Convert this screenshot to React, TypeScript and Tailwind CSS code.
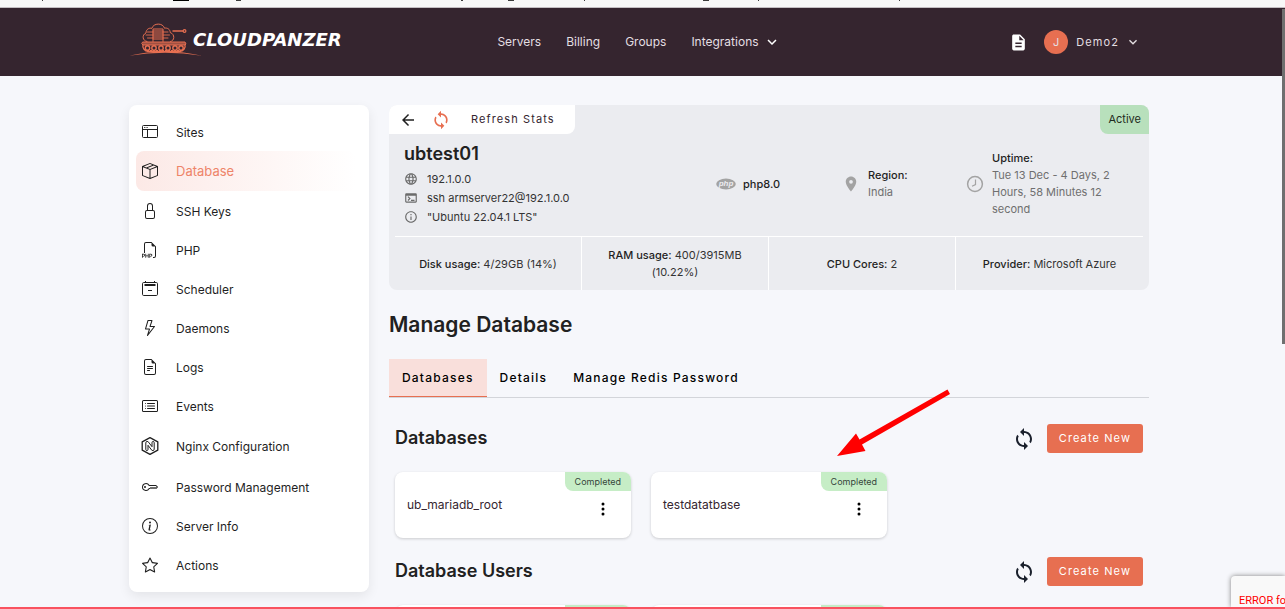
import type { ReactNode } from "react";
import clsx from "clsx";
import {
  BsBoxSeam,
  BsCardList,
  BsFileEarmarkText,
  BsFiletypePhp,
  BsInfoCircle,
  BsKey,
  BsLightning,
  BsLock,
  BsStar,
  BsThreeDotsVertical,
} from "react-icons/bs";
import {
  MdArrowBack,
  MdDescription,
  MdInfoOutline,
  MdKeyboardArrowDown,
  MdLanguage,
  MdLocationOn,
  MdOutlineTerminal,
  MdSync,
} from "react-icons/md";

function SitesIcon() {
  return (
    <svg viewBox="0 0 16 16" className="size-4" fill="none" stroke="currentColor" aria-hidden="true">
      <rect x="0.5" y="1.5" width="15" height="12" rx="1" />
      <path d="M1 5.5h14M5.5 5.5v8" />
      <path d="M2 3.5h4" strokeWidth="0.8" strokeDasharray="1 0.6" />
    </svg>
  );
}

function SchedulerIcon() {
  return (
    <svg viewBox="0 0 16 16" className="size-4" fill="none" stroke="currentColor" aria-hidden="true">
      <rect x="0.5" y="1.5" width="15" height="13" rx="1.2" />
      <path d="M3.5 0v1.5M12.5 0v1.5M6 9.5h4" />
      <path d="M2.5 4h11" strokeWidth="2" />
    </svg>
  );
}

function NginxIcon() {
  return (
    <svg viewBox="0 0 18 18" className="size-[18px]" fill="none" stroke="currentColor" strokeLinejoin="round" aria-hidden="true">
      <path d="M9 0.7 16.8 4.8v8.4L9 17.3 1.2 13.2V4.8z" strokeWidth="1.3" />
      <path d="M4.8 12.6V5.8q0-1.3 1.3-1.3h.9l4 5.2V5.6q0-1.1 1.1-1.1t1.1 1.1v6.6q0 1.3-1.3 1.3h-.9L7 8.3v4.2q0 1-1.1 1t-1.1-.9z" />
    </svg>
  );
}

function PhpIcon() {
  return (
    <svg viewBox="0 0 20 12" className="h-3 w-5" aria-hidden="true">
      <ellipse cx="10" cy="6" rx="9.8" ry="5.4" fill="#a3a3a3" />
      <text x="10" y="8.4" textAnchor="middle" fontSize="8" fontStyle="italic" fontWeight="bold" fontFamily="Liberation Sans, sans-serif" fill="#ebecf0">
        php
      </text>
    </svg>
  );
}

function ClockIcon() {
  return (
    <svg viewBox="0 0 18 18" className="size-[18px] shrink-0 text-[#a3a3a3]" fill="none" stroke="currentColor" aria-hidden="true">
      <circle cx="9" cy="9" r="7.4" strokeWidth="1.5" />
      <path d="M9.5 4.5v5L6 11.2" strokeWidth="1.2" />
    </svg>
  );
}

function TankLogo() {
  return (
    <svg viewBox="0 0 74 34" className="-mr-2.5 h-[34px] w-[74px]" fill="none" stroke="#e76f51" strokeWidth="1" strokeLinecap="round" aria-hidden="true">
      <path d="M18 18.5c-4.5-.5-5.5-6.5-1-8.5 0-3.5 3-5.5 5.800-4.600C24.500-.3 34-.3 35.500 5.200c3-.7 5.700 1.300 5.700 4.300 5 1.800 4.500 8.500.3 9" />
      <path d="M24 18.5V6h10v12.5" />
      <path d="M24 8h10M24 10h10M24 12h10M24 14h10M24 16h10" strokeWidth="1.2" />
      <path d="M18.5 9h5.5M17 12h7M18.5 15h5.5M34 9h5M34 12h6.5M34 15h5" strokeWidth="0.9" />
      <path d="M44 8h10" strokeWidth="1.5" />
      <circle cx="55.5" cy="8" r="1.4" strokeWidth="1.2" />
      <path d="M14 19h42l1 2-1 1H14l-1-1z" fill="#e76f51" fillOpacity="0.6" />
      <path d="M14 22c-1 3 2 6.3 5 6.3h32c3 0 6-3.3 5-6.3" strokeWidth="1.3" />
      {[18.5, 25, 32, 39, 46, 52].map((cx) => (
        <circle key={cx} cx={cx} cy="25" r="2.2" strokeWidth="1.4" />
      ))}
      <path d="M18 28h34" strokeWidth="1.8" strokeDasharray="2 1" strokeLinecap="butt" />
      <path d="M0 32.8Q36 24 73 32.8 36 26.5 0 32.8z" fill="#e76f51" stroke="none" />
    </svg>
  );
}

const navLinks = ["Servers", "Billing", "Groups"];

const menu: { label: string; icon: ReactNode; active?: boolean; tall?: boolean }[] = [
  { label: "Sites", icon: <SitesIcon /> },
  { label: "Database", icon: <BsBoxSeam />, active: true },
  { label: "SSH Keys", icon: <BsLock /> },
  { label: "PHP", icon: <BsFiletypePhp /> },
  { label: "Scheduler", icon: <SchedulerIcon /> },
  { label: "Daemons", icon: <BsLightning /> },
  { label: "Logs", icon: <BsFileEarmarkText /> },
  { label: "Events", icon: <BsCardList /> },
  { label: "Nginx Configuration", icon: <NginxIcon />, tall: true },
  { label: "Password Management", icon: <BsKey /> },
  { label: "Server Info", icon: <BsInfoCircle /> },
  { label: "Actions", icon: <BsStar /> },
];

const usage = [
  { label: "Disk usage:", value: "4/29GB (14%)" },
  { label: "RAM usage:", value: "400/3915MB (10.22%)" },
  { label: "CPU Cores:", value: "2" },
  { label: "Provider:", value: "Microsoft Azure" },
];

const tabs = ["Databases", "Details", "Manage Redis Password"];

function Header() {
  return (
    <header className="shrink-0 bg-[#35252f] pr-[7px] text-[#e4dfe2]">
      <div className="mx-auto grid h-[68px] max-w-[1020px] grid-cols-[1fr_auto_1fr] items-center">
        <a href="#" className="flex items-center pb-1">
          <TankLogo />
          <span className="font-['DejaVu_Sans',sans-serif] text-lg font-bold text-white italic">CLOUDPANZER</span>
        </a>
        <nav className="flex items-center gap-[25px] text-xs">
          {navLinks.map((link) => (
            <a key={link} href="#">{link}</a>
          ))}
          <button type="button" className="flex items-center gap-1">
            Integrations
            <MdKeyboardArrowDown className="size-[18px] text-white" />
          </button>
        </nav>
        <div className="flex items-center justify-end gap-4 pr-2">
          <button type="button" aria-label="Documentation">
            <MdDescription className="size-[19px] text-white" />
          </button>
          <button type="button" className="flex items-center gap-2 text-[11px] tracking-widest">
            <span className="flex size-6 items-center justify-center rounded-full bg-[#e76f51] text-[11px] tracking-normal">J</span>
            Demo2
            <MdKeyboardArrowDown className="-ml-0.5 size-4" />
          </button>
        </div>
      </div>
    </header>
  );
}

function Sidebar() {
  return (
    <nav className="w-60 shrink-0 rounded-lg bg-white px-[7px] pt-[7px] pb-2 shadow-[0_4px_12px_rgba(0,0,0,0.08)]">
      {menu.map((item) => (
        <a
          key={item.label}
          href="#"
          className={clsx(
            "mr-1.5 flex items-center gap-[17px] rounded-lg pl-[5px] text-[#1f1f1f]",
            item.tall ? "h-[42px]" : item.active ? "h-10" : "h-[39px]",
            item.active ? "bg-linear-to-r from-[#fce9e6] to-white text-[13px]" : "text-xs",
          )}
        >
          <span className="flex w-[18px] justify-center text-base">{item.icon}</span>
          <span className={clsx("pt-0.5", item.active && "text-[#ee8469]")}>{item.label}</span>
        </a>
      ))}
    </nav>
  );
}

function ServerCard() {
  return (
    <section className="overflow-hidden rounded-lg bg-[#ebecf0] text-[11px] text-[#333]">
      <div className="flex h-[29px] items-stretch justify-between">
        <div className="flex items-center rounded-br-lg bg-white pr-5 pl-2.5">
          <button type="button" aria-label="Back">
            <MdArrowBack className="size-[18px] text-[#212121]" />
          </button>
          <button type="button" className="flex items-center text-[11px] tracking-widest text-[#35252f]">
            <MdSync className="mr-5 ml-3.5 size-5 text-[#e76f51]" />
            Refresh Stats
          </button>
        </div>
        <span className="flex items-center rounded-bl-lg bg-[#b8e0bc] px-2 text-[#1f2b20]">Active</span>
      </div>
      <div className="flex h-[102px] items-center px-[15px] pb-0.5">
        <div className="w-[312px]">
          <h1 className="mb-1 text-lg leading-6 font-semibold text-[#212121]">ubtest01</h1>
          <ul className="leading-[19px]">
            <li className="flex items-center gap-[9px]">
              <MdLanguage className="size-3.5 text-[#6b6b6b]" />
              192.1.0.0
            </li>
            <li className="flex items-center gap-[9px]">
              <MdOutlineTerminal className="size-3.5 text-[#6b6b6b]" />
              ssh armserver22@192.1.0.0
            </li>
            <li className="flex items-center gap-[9px]">
              <MdInfoOutline className="size-3.5 text-[#6b6b6b]" />
              "Ubuntu 22.04.1 LTS"
            </li>
          </ul>
        </div>
        <div className="flex w-[126px] items-center gap-[7px] font-medium text-[#1f1f1f]">
          <PhpIcon />
          php8.0
        </div>
        <div className="flex w-[124px] items-center gap-2">
          <MdLocationOn className="size-[18px] text-[#a3a3a3]" />
          <div className="leading-[17px] text-[#6f6f6f]">
            <p className="font-medium text-[#1f1f1f]">Region:</p>
            <p>India</p>
          </div>
        </div>
        <div className="flex flex-1 items-center gap-2">
          <ClockIcon />
          <div className="w-[122px] leading-[17px] text-[#6f6f6f]">
            <p className="font-medium text-[#1f1f1f]">Uptime:</p>
            <p>Tue 13 Dec - 4 Days, 2 Hours, 58 Minutes 12 second</p>
          </div>
        </div>
      </div>
      <dl className="mx-1.5 grid grid-cols-4 divide-x divide-white border-t border-white text-center leading-[17px]">
        {usage.map((item) => (
          <div key={item.label} className="flex h-[53px] items-center justify-center px-5 pt-px">
            <div>
              <dt className="inline font-medium text-[#1f1f1f]">{item.label}</dt>{" "}
              <dd className="inline">{item.value}</dd>
            </div>
          </div>
        ))}
      </dl>
    </section>
  );
}

function DatabaseSection({ title, items }: { title: string; items: string[] }) {
  return (
    <section className="px-1.5">
      <div className="flex items-center">
        <h3 className="flex-1 pb-0.5 text-lg leading-6 font-semibold text-[#212121]">{title}</h3>
        <button type="button" aria-label={`Refresh ${title}`} className="mr-[11px]">
          <MdSync className="size-6 text-[#1a202c]" />
        </button>
        <button type="button" className="h-[29px] rounded-[3px] bg-[#e76f51] px-3 text-[11px] tracking-widest text-white">
          Create New
        </button>
      </div>
      <div className="mt-[19px] grid grid-cols-3 gap-5">
        {items.map((name) => (
          <article key={name} className="relative flex h-[66px] items-center justify-between rounded-lg bg-white pr-5 pl-3 text-xs text-[#35252f] shadow-[0_1px_3px_rgba(0,0,0,0.18)]">
            <span>{name}</span>
            <button type="button" aria-label={`${name} options`} className="pt-2">
              <BsThreeDotsVertical className="size-4 text-black" />
            </button>
            <span className="absolute top-0 right-0 flex h-[19px] items-center rounded-tr-lg rounded-bl-lg bg-[#c6edc6] px-2.5 text-[9px] text-[#35453a]">
              Completed
            </span>
          </article>
        ))}
      </div>
    </section>
  );
}

export default function App() {
  return (
    <div className="relative flex h-screen flex-col overflow-hidden border-b-2 border-[#f9525f] bg-[#f6f7fb] font-[Inter,sans-serif]">
      <div className="h-2 shrink-0 border-b border-[#c4bfc3] bg-[#f8f8f8]">
        <svg className="block h-1 w-full" fill="#3b3b3b" aria-hidden="true">
          <path d="M173 0h16v1h-16z" fill="#000" />
          <path d="M42 0h1v1h-1zM236 0h5v1h-5zM461 0h2v1h-2zM508 0h6v1h-6zM584 0h1v1h-1zM703 0h6v1h-6zM758 0h1v1h-1zM899 0h1v1h-1z" />
        </svg>
      </div>
      <Header />
      <div className="min-h-0 flex-1 overflow-hidden pt-[29px] pr-[7px]">
        <div className="mx-auto flex max-w-[1020px] items-start gap-5">
          <Sidebar />
          <main className="relative min-w-0 flex-1">
            <ServerCard />
            <h2 className="mt-[21px] text-[21px] leading-7 font-semibold text-[#212121]">Manage Database</h2>
            <div role="tablist" className="mt-5 mb-[26px] flex border-b border-[#d3d5da] text-xs font-medium tracking-widest text-black">
              {tabs.map((tab, i) => (
                <button
                  key={tab}
                  type="button"
                  role="tab"
                  aria-selected={i === 0}
                  className={clsx("h-[38px] px-[13px]", i === 0 && "border-b border-[#e76f51] bg-[#f9dfdb]")}
                >
                  {tab}
                </button>
              ))}
            </div>
            <div className="space-y-[19px]">
              <DatabaseSection title="Databases" items={["ub_mariadb_root", "testdatatbase"]} />
              <DatabaseSection title="Database Users" items={["ub_mariadb_user", "testuser"]} />
            </div>
            <svg viewBox="0 0 114 68" className="pointer-events-none absolute top-[284px] left-[448px] h-[68px] w-[114px]" fill="#f00" aria-hidden="true">
              <path d="M0 67 19 44.5 22.5 50.5 110.5 0.5 113 5 25 55.5 28.5 62z" />
            </svg>
          </main>
        </div>
      </div>
      <div className="absolute top-[9px] right-0 h-[335px] w-[3px] bg-[#6f6f6f]" />
      <div className="absolute right-0 bottom-0 h-[31px] w-[54px] overflow-hidden rounded-tl-sm bg-[#f9f9f9] pt-[17px] pl-2 font-[Roboto,sans-serif] text-[11px] leading-4 whitespace-nowrap text-[#f00] shadow-[0_0_5px_gray]">
        ERROR for site owner
      </div>
    </div>
  );
}
